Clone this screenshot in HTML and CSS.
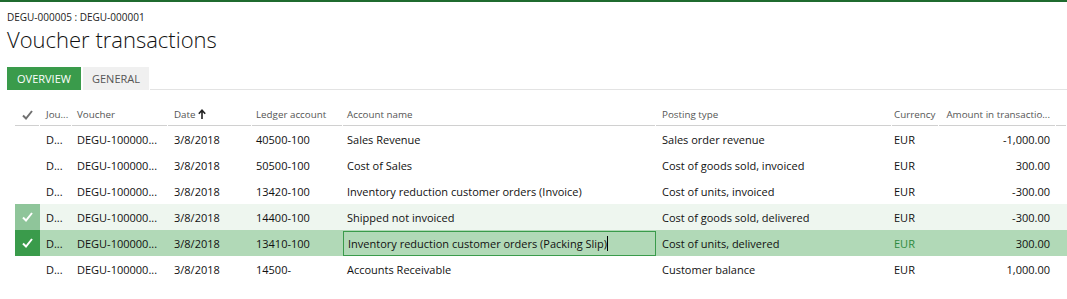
FILE: index.html
```html
<!DOCTYPE html>
<html lang="en">
<head>
    <meta charset="UTF-8">
    <meta name="viewport" content="width=device-width, initial-scale=1.0">
    <title>Voucher transactions</title>
    <link rel="stylesheet" href="styles.css">
</head>
<body>
<div class="topbar"></div>
<div class="page">
    <div class="caption">DEGU-000005 : DEGU-000001</div>
    <h1 class="title">Voucher transactions</h1>
    <div class="tabs">
        <div class="tab active">OVERVIEW</div>
        <div class="tab general">GENERAL</div>
        <div class="tab-rest"></div>
    </div>
</div>

<div class="grid">
    <div class="row head">
        <div class="cell chk"><svg width="11" height="10" viewBox="0 0 11 10"><path d="M1 5.5 L4 8.5 L10 1" fill="none" stroke="#707070" stroke-width="2"/></svg></div>
        <div class="cell c-jou">Jou...</div>
        <div class="cell c-vou">Voucher</div>
        <div class="cell c-date">Date<svg class="arrow" width="8" height="10" viewBox="0 0 8 10"><path d="M4 10 V1.5 M0.8 4.8 L4 1.3 L7.2 4.8" fill="none" stroke="#222" stroke-width="1.6"/></svg></div>
        <div class="cell c-led">Ledger account</div>
        <div class="cell c-acc">Account name</div>
        <div class="cell c-post">Posting type</div>
        <div class="cell c-cur">Currency</div>
        <div class="cell c-amt">Amount in transactio...</div>
        <div class="cell c-fill"></div>
    </div>

    <div class="row">
        <div class="cell chk"></div>
        <div class="cell c-jou">D...</div>
        <div class="cell c-vou">DEGU-100000...</div>
        <div class="cell c-date">3/8/2018</div>
        <div class="cell c-led">40500-100</div>
        <div class="cell c-acc">Sales Revenue</div>
        <div class="cell c-post">Sales order revenue</div>
        <div class="cell c-cur">EUR</div>
        <div class="cell c-amt">-1,000.00</div>
        <div class="cell c-fill"></div>
    </div>
    <div class="row">
        <div class="cell chk"></div>
        <div class="cell c-jou">D...</div>
        <div class="cell c-vou">DEGU-100000...</div>
        <div class="cell c-date">3/8/2018</div>
        <div class="cell c-led">50500-100</div>
        <div class="cell c-acc">Cost of Sales</div>
        <div class="cell c-post">Cost of goods sold, invoiced</div>
        <div class="cell c-cur">EUR</div>
        <div class="cell c-amt">300.00</div>
        <div class="cell c-fill"></div>
    </div>
    <div class="row">
        <div class="cell chk"></div>
        <div class="cell c-jou">D...</div>
        <div class="cell c-vou">DEGU-100000...</div>
        <div class="cell c-date">3/8/2018</div>
        <div class="cell c-led">13420-100</div>
        <div class="cell c-acc">Inventory reduction customer orders (Invoice)</div>
        <div class="cell c-post">Cost of units, invoiced</div>
        <div class="cell c-cur">EUR</div>
        <div class="cell c-amt">-300.00</div>
        <div class="cell c-fill"></div>
    </div>
    <div class="row marked">
        <div class="cell chk"><svg width="11" height="10" viewBox="0 0 11 10"><path d="M1 5.5 L4 8.5 L10 1" fill="none" stroke="#fff" stroke-width="2"/></svg></div>
        <div class="cell c-jou">D...</div>
        <div class="cell c-vou">DEGU-100000...</div>
        <div class="cell c-date">3/8/2018</div>
        <div class="cell c-led">14400-100</div>
        <div class="cell c-acc">Shipped not invoiced</div>
        <div class="cell c-post">Cost of goods sold, delivered</div>
        <div class="cell c-cur">EUR</div>
        <div class="cell c-amt">-300.00</div>
        <div class="cell c-fill"></div>
    </div>
    <div class="row selected">
        <div class="cell chk"><svg width="11" height="10" viewBox="0 0 11 10"><path d="M1 5.5 L4 8.5 L10 1" fill="none" stroke="#fff" stroke-width="2"/></svg></div>
        <div class="cell c-jou">D...</div>
        <div class="cell c-vou">DEGU-100000...</div>
        <div class="cell c-date">3/8/2018</div>
        <div class="cell c-led">13410-100</div>
        <div class="cell c-acc"><div class="edit">Inventory reduction customer orders (Packing Slip)<span class="caret"></span></div></div>
        <div class="cell c-post">Cost of units, delivered</div>
        <div class="cell c-cur cur-green">EUR</div>
        <div class="cell c-amt">300.00</div>
        <div class="cell c-fill"></div>
    </div>
    <div class="row">
        <div class="cell chk"></div>
        <div class="cell c-jou">D...</div>
        <div class="cell c-vou">DEGU-100000...</div>
        <div class="cell c-date">3/8/2018</div>
        <div class="cell c-led">14500-</div>
        <div class="cell c-acc">Accounts Receivable</div>
        <div class="cell c-post">Customer balance</div>
        <div class="cell c-cur">EUR</div>
        <div class="cell c-amt">1,000.00</div>
        <div class="cell c-fill"></div>
    </div>
</div>
</body>
</html>
```

FILE: styles.css
```css
body {
    margin: 0;
    background-color: #fff;
    color: #000;
    font-family: "Open Sans", "Noto Sans", sans-serif;
}

.topbar {
    height: 2px;
    background-color: #1f6b2f;
}

.page {
    padding: 0 0 0 7px;
}

.caption {
    margin-top: 8px;
    font-size: 10px;
    line-height: 14px;
    color: #222;
}

.title {
    margin: 0;
    font-size: 22px;
    font-weight: 300;
    line-height: 30px;
    color: #111;
}

.tabs {
    display: flex;
    margin-top: 13px;
    height: 23px;
}

.tab {
    width: 66px;
    text-align: center;
    font-size: 11px;
    line-height: 23px;
    color: #555;
    background-color: #f0f0f0;
    margin-right: 2px;
}

.tab.active {
    width: 74px;
    background-color: #3a9b4b;
    color: #fff;
}

.tab.general {
    margin-right: 1px;
}

.tab-rest {
    flex: 1;
    border-bottom: 1px solid #e3e3e3;
}

.grid {
    margin: 13px 0 0 15px;
}

.row {
    display: flex;
    height: 26px;
    align-items: stretch;
    font-size: 11px;
    color: #111;
}

.row.head {
    height: 23px;
    font-size: 9.8px;
    color: #555;
}

.cell {
    box-sizing: border-box;
    display: flex;
    align-items: center;
    padding-left: 5px;
    white-space: nowrap;
    overflow: hidden;
    flex-shrink: 0;
}

.row.head .cell {
    background-image: linear-gradient(#d0d0d0, #d0d0d0);
    background-size: calc(100% - 1px) 1px;
    background-position: left bottom;
    background-repeat: no-repeat;
}

.chk { width: 25px; padding-left: 0; justify-content: center; }
.c-jou { width: 32px; padding-left: 6px; }
.c-vou { width: 96px; }
.c-date { width: 84px; padding-left: 6px; }
.c-led { width: 91px; padding-left: 4px; }
.c-acc { width: 313px; padding-left: 4px; }
.c-post { width: 236px; padding-left: 6px; }
.c-cur { width: 47px; padding-left: 2px; }
.c-amt { width: 117px; justify-content: flex-end; padding-left: 0; padding-right: 6px; }
.c-fill { flex: 1 1 auto; }

.arrow {
    margin-left: 2px;
    margin-bottom: 2px;
}

.row.marked {
    background-color: #eef6ef;
}

.row.marked .chk {
    background-color: #8fc59a;
}

.row.selected {
    background-color: #b1d9b7;
}

.row.selected .chk {
    background-color: #3a9b4b;
}

.row.selected .c-acc {
    padding-left: 0;
}

.edit {
    box-sizing: border-box;
    width: 314px;
    height: 25px;
    border: 1px solid #3a9b4b;
    padding-left: 4px;
    display: flex;
    align-items: center;
}

.caret {
    display: inline-block;
    width: 1px;
    height: 15px;
    background-color: #000;
}

.cur-green {
    color: #2f8a3f;
}
```
